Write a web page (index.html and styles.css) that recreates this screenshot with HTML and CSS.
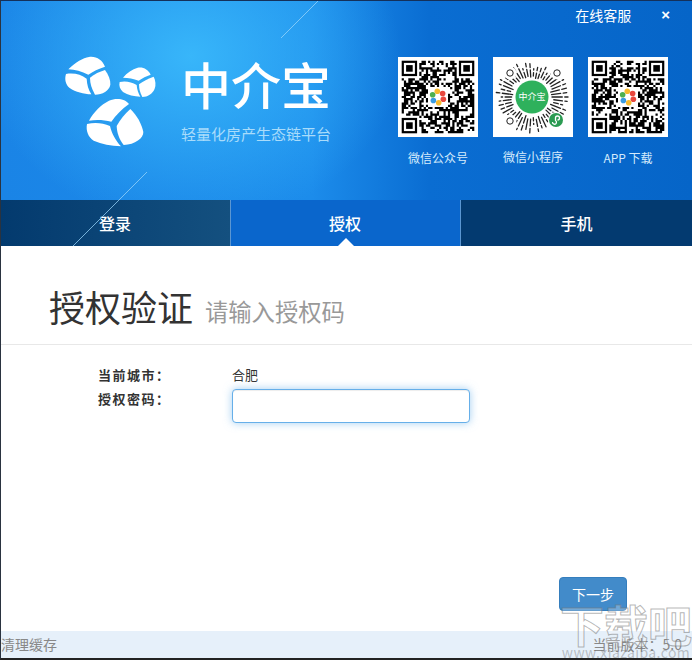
FILE: index.html
```html
<!DOCTYPE html>
<html lang="zh-CN">
<head>
    <meta charset="UTF-8">
    <title>中介宝</title>
    <link rel="stylesheet" href="styles.css">
</head>
<body>
    <div class="window">
        <header class="banner">
            <div class="top-bar">
                <a class="service-link">在线客服</a>
                <span class="close-btn">×</span>
            </div>
            <div class="banner-main">
                <svg class="logo" viewBox="0 0 330 330" fill="#fff">
                    <path d="M40 70C62 48 84 36 102 33C124 30 142 42 150 62C130 68 114 76 100 86C80 76 60 71 40 70Z"/>
                    <path d="M33 84C58 80 78 86 95 98C96 116 100 130 109 145C86 144 62 138 44 126C32 116 28 100 33 84Z"/>
                    <path d="M150 72C160 86 167 102 166 116C163 134 142 146 120 146C110 128 105 112 105 95C118 84 134 77 150 72Z"/>
                    <path d="M204 95C216 80 232 69 248 65C264 62 280 70 287 86C274 90 262 96 251 104C236 98 220 95 204 95Z"/>
                    <path d="M194 108C212 104 230 108 245 117C246 130 250 142 256 152C238 152 218 147 204 138C195 130 191 120 194 108Z"/>
                    <path d="M296 92C302 104 303 118 299 128C292 144 278 152 262 153C255 141 252 128 252 115C266 105 280 97 296 92Z"/>
                    <path d="M102 224C116 198 138 176 162 164C186 154 212 160 222 174C200 190 182 208 169 227C148 222 124 221 102 224Z"/>
                    <path d="M96 234C120 229 144 231 165 240C170 262 182 284 198 301C168 300 140 294 116 284C100 274 92 254 96 234Z"/>
                    <path d="M226 189C246 208 260 234 265 258C266 276 240 296 206 297C192 280 186 260 185 240C196 220 210 204 226 189Z"/>
                </svg>
                <div class="brand">
                    <div class="brand-name">中介宝</div>
                    <div class="brand-slogan">轻量化房产生态链平台</div>
                </div>
                <div class="qr-list">
                    <div class="qr-item">
                        <svg class="qr-code" data-seed="17" viewBox="0 0 80 80"></svg>
                        <p>微信公众号</p>
                    </div>
                    <div class="qr-item">
                        <svg class="qr-code" data-mini="1" viewBox="0 0 80 80"></svg>
                        <p class="mini-label">微信小程序</p>
                    </div>
                    <div class="qr-item">
                        <svg class="qr-code" data-seed="53" viewBox="0 0 80 80"></svg>
                        <p>APP 下载</p>
                    </div>
                </div>
            </div>
        </header>

        <nav class="tabs">
            <a class="tab">登录</a>
            <a class="tab active">授权</a>
            <a class="tab">手机</a>
        </nav>

        <main class="content">
            <div class="page-title">
                <h1>授权验证</h1>
                <small>请输入授权码</small>
            </div>
            <form class="auth-form">
                <div class="form-row">
                    <label>当前城市：</label>
                    <span class="form-value">合肥</span>
                </div>
                <div class="form-row">
                    <label>授权密码：</label>
                    <input type="text" class="form-input">
                </div>
            </form>
            <div class="actions">
                <button type="button" class="next-btn">下一步</button>
            </div>
        </main>

        <footer class="status-bar">
            <a>清理缓存</a>
            <span class="version">当前版本：5.0</span>
        </footer>

        <svg class="banner-lines" viewBox="0 0 692 246">
            <line x1="318" y1="1" x2="281" y2="38"/>
            <line x1="147" y1="172" x2="73" y2="246"/>
        </svg>
        <div class="watermark">
            <span class="wm-name">下载吧</span>
            <span class="wm-url">www.xiazaiba.com</span>
        </div>
    </div>
    <script src="qr.js"></script>
</body>
</html>
```

FILE: styles.css
```css
* {
    margin: 0;
    padding: 0;
    box-sizing: border-box;
    font-family: 'Noto Sans CJK SC', 'Liberation Sans', sans-serif;
}

html, body {
    width: 692px;
    height: 660px;
    overflow: hidden;
    background-color: white;
}

.window {
    position: relative;
    display: flex;
    flex-direction: column;
    width: 692px;
    height: 660px;
    border-top: 1px solid #14305a;
    border-left: 1px solid #2a3340;
    border-bottom: 2px solid #222;
}

.banner {
    height: 199px;
    color: white;
    background-image:
        radial-gradient(ellipse 210px 170px at 190px 55px, #38b6fa 0%, rgba(56, 182, 250, 0) 100%),
        linear-gradient(90deg, #1a84e6 0%, #1c8ceb 45%, #0a6dd2 62%, #0665c8 100%);
}

.top-bar {
    display: flex;
    justify-content: flex-end;
    align-items: center;
    height: 27px;
    padding-right: 22px;
    font-size: 14px;
}

.service-link {
    margin-right: 30px;
}

.close-btn {
    font-family: 'Liberation Sans', sans-serif;
    font-size: 15px;
    font-weight: 700;
    line-height: 1;
}

.banner-main {
    display: flex;
    padding-top: 18px;
}

.logo {
    width: 110px;
    height: 110px;
    margin-left: 54px;
}

.brand {
    width: 217px;
    margin-left: 16px;
    padding-top: 9px;
}

.brand-name {
    font-size: 50px;
    font-weight: 500;
    line-height: 56px;
}

.brand-slogan {
    margin-top: 13px;
    font-size: 15px;
    line-height: 20px;
    color: #a9dcfb;
}

.qr-list {
    display: flex;
    gap: 15px;
    padding-top: 11px;
}

.qr-item {
    width: 80px;
    text-align: center;
    font-size: 12px;
    color: #d5ebfc;
}

.qr-item p {
    margin-top: 12px;
    line-height: 18px;
}

.qr-item .mini-label {
    margin-top: 11px;
}

.qr-code {
    display: block;
    width: 80px;
    height: 80px;
    background-color: white;
}

.banner-lines {
    position: absolute;
    top: -1px;
    left: -1px;
    width: 692px;
    height: 246px;
    pointer-events: none;
}

.banner-lines line {
    stroke: #9bd6fb;
    stroke-width: 1;
    opacity: 0.75;
}

.tabs {
    display: flex;
    height: 46px;
}

.tab {
    position: relative;
    flex: 1;
    font-size: 16px;
    font-weight: 500;
    line-height: 46px;
    text-align: center;
    color: white;
    background-color: #033a70;
}

.tab:first-child {
    flex: none;
    width: 229px;
    padding-right: 1px;
    background-image: linear-gradient(90deg, #033a6e, #14507f);
}

.tab.active {
    flex: none;
    width: 231px;
    padding-right: 1px;
    background-color: #0a66cc;
    border-left: 1px solid #5b96d2;
    border-right: 1px solid #5b96d2;
}

.tab.active::after {
    content: '';
    position: absolute;
    left: 50%;
    bottom: 0;
    margin-left: -8px;
    border-left: 8px solid transparent;
    border-right: 8px solid transparent;
    border-bottom: 8px solid white;
}

.content {
    position: relative;
    flex: 1;
}

.page-title {
    display: flex;
    align-items: center;
    height: 99px;
    padding: 33px 0 11px 48px;
    border-bottom: 1px solid #e8e8e8;
}

.page-title h1 {
    font-size: 36px;
    font-weight: 400;
    line-height: 54px;
    color: #333;
}

.page-title small {
    margin-left: 12px;
    padding-top: 10px;
    font-size: 23.3px;
    color: #999;
}

.auth-form {
    padding: 20px 0 0 97px;
}

.form-row {
    display: flex;
    align-items: flex-start;
    font-size: 13px;
    line-height: 19px;
    color: #333;
}

.form-row + .form-row {
    margin-top: 5px;
}

.form-row label {
    width: 134px;
    font-size: 13px;
    font-weight: 700;
    letter-spacing: 1.5px;
}

.form-input {
    width: 238px;
    height: 34px;
    border: 1px solid #66afe9;
    border-radius: 4px;
    outline: none;
    box-shadow: inset 0 1px 1px rgba(0, 0, 0, 0.075), 0 0 8px rgba(102, 175, 233, 0.6);
}

.actions {
    position: absolute;
    right: 65px;
    bottom: 20px;
}

.next-btn {
    width: 68px;
    height: 34px;
    font-size: 14px;
    color: white;
    background-color: #428bca;
    border: 1px solid #357ebd;
    border-radius: 4px;
}

.status-bar {
    display: flex;
    justify-content: space-between;
    height: 27px;
    padding-right: 10px;
    font-size: 14px;
    line-height: 27px;
    color: #888;
    background-color: #e6f0fa;
}

.version {
    font-family: 'Noto Sans CJK TC', 'Liberation Sans', sans-serif;
}

.watermark {
    position: absolute;
    right: 0;
    bottom: 0;
    display: flex;
    flex-direction: column;
    align-items: center;
    width: 132px;
    height: 56px;
    pointer-events: none;
}

.wm-name {
    font-size: 44px;
    font-weight: 700;
    line-height: 44px;
    color: rgba(255, 255, 255, 0.25);
    -webkit-text-stroke: 1px rgba(120, 120, 120, 0.55);
}

.wm-url {
    font-size: 14px;
    line-height: 12px;
    letter-spacing: 0.4px;
    color: rgba(110, 110, 110, 0.4);
}
```

FILE: qr.js
```js
// draws the qr codes and the mini program code
var NS = 'http://www.w3.org/2000/svg';

function add(svg, tag, attrs) {
    var el = document.createElementNS(NS, tag);
    for (var k in attrs) el.setAttribute(k, attrs[k]);
    svg.appendChild(el);
    return el;
}

function rng(seed) {
    return function() {
        seed = (seed * 1664525 + 1013904223) % 4294967296;
        return seed / 4294967296;
    };
}

function finder(svg, x, y, s) {
    add(svg, 'rect', { x: x + s / 2, y: y + s / 2, width: s * 6, height: s * 6, fill: 'none', stroke: '#000', 'stroke-width': s });
    add(svg, 'rect', { x: x + s * 2, y: y + s * 2, width: s * 3, height: s * 3, fill: '#000' });
}

function inFinder(r, c, n) {
    return (r < 8 && c < 8) || (r < 8 && c >= n - 8) || (r >= n - 8 && c < 8);
}

function drawQr(svg, seed) {
    var n = 33, s = 2.2, off = 3.7, rand = rng(seed), d = '';
    for (var r = 0; r < n; r++) {
        for (var c = 0; c < n; c++) {
            if (inFinder(r, c, n) || rand() < 0.42) continue;
            d += 'M' + (off + c * s) + ' ' + (off + r * s) + 'h' + s + 'v' + s + 'h-' + s + 'z';
        }
    }
    add(svg, 'path', { d: d, fill: '#000' });
    finder(svg, off, off, s);
    finder(svg, off + (n - 7) * s, off, s);
    finder(svg, off, off + (n - 7) * s, s);

    // small coloured logo in the middle
    add(svg, 'rect', { x: 30, y: 30, width: 20, height: 20, fill: '#fff' });
    var colors = ['#e8483f', '#f5b92e', '#3a9be0', '#4cb050', '#f5b92e', '#e8483f'];
    colors.forEach(function(color, i) {
        var a = i * Math.PI / 3 + 0.4;
        add(svg, 'circle', { cx: 40 + Math.cos(a) * 5.8, cy: 40 + Math.sin(a) * 5.8, r: 2.8, fill: color });
    });
}

function drawMini(svg) {
    var rand = rng(29), cx = 39, cy = 40;
    for (var i = 0; i < 50; i++) {
        var a = i / 50 * Math.PI * 2;
        var from = 19 + rand() * 4;
        var len = 3 + rand() * 8;
        for (var j = 0; j < 2; j++) {
            var r1 = j ? from + len + 2.5 : from;
            var r2 = j ? Math.min(r1 + 1 + rand() * 4, 36) : from + len;
            if (r1 > 35) continue;
            add(svg, 'line', {
                x1: cx + Math.cos(a) * r1, y1: cy + Math.sin(a) * r1,
                x2: cx + Math.cos(a) * r2, y2: cy + Math.sin(a) * r2,
                stroke: '#222', 'stroke-width': 1.3, 'stroke-linecap': 'round'
            });
        }
    }
    [[17, 16], [64, 16], [17, 64]].forEach(function(p) {
        add(svg, 'circle', { cx: p[0], cy: p[1], r: 6.5, fill: '#fff' });
        add(svg, 'circle', { cx: p[0], cy: p[1], r: 3.2, fill: 'none', stroke: '#222', 'stroke-width': 1 });
    });
    add(svg, 'circle', { cx: cx, cy: cy, r: 16.5, fill: '#2eb15c' });
    var label = add(svg, 'text', { x: cx, y: cy + 3.2, 'text-anchor': 'middle', 'font-size': 9, fill: '#fff' });
    label.textContent = '中介宝';
    add(svg, 'circle', { cx: 63, cy: 63, r: 8, fill: '#fff' });
    add(svg, 'circle', { cx: 63, cy: 63, r: 7, fill: '#2b9b52' });
    add(svg, 'path', { d: 'M59.5 65a2 2 0 1 0 3-1.5v-2.5a2 2 0 1 1 2 2', fill: 'none', stroke: '#fff', 'stroke-width': 1.3 });
}

document.querySelectorAll('.qr-code').forEach(function(svg) {
    if (svg.dataset.mini) drawMini(svg);
    else drawQr(svg, Number(svg.dataset.seed));
});
```
